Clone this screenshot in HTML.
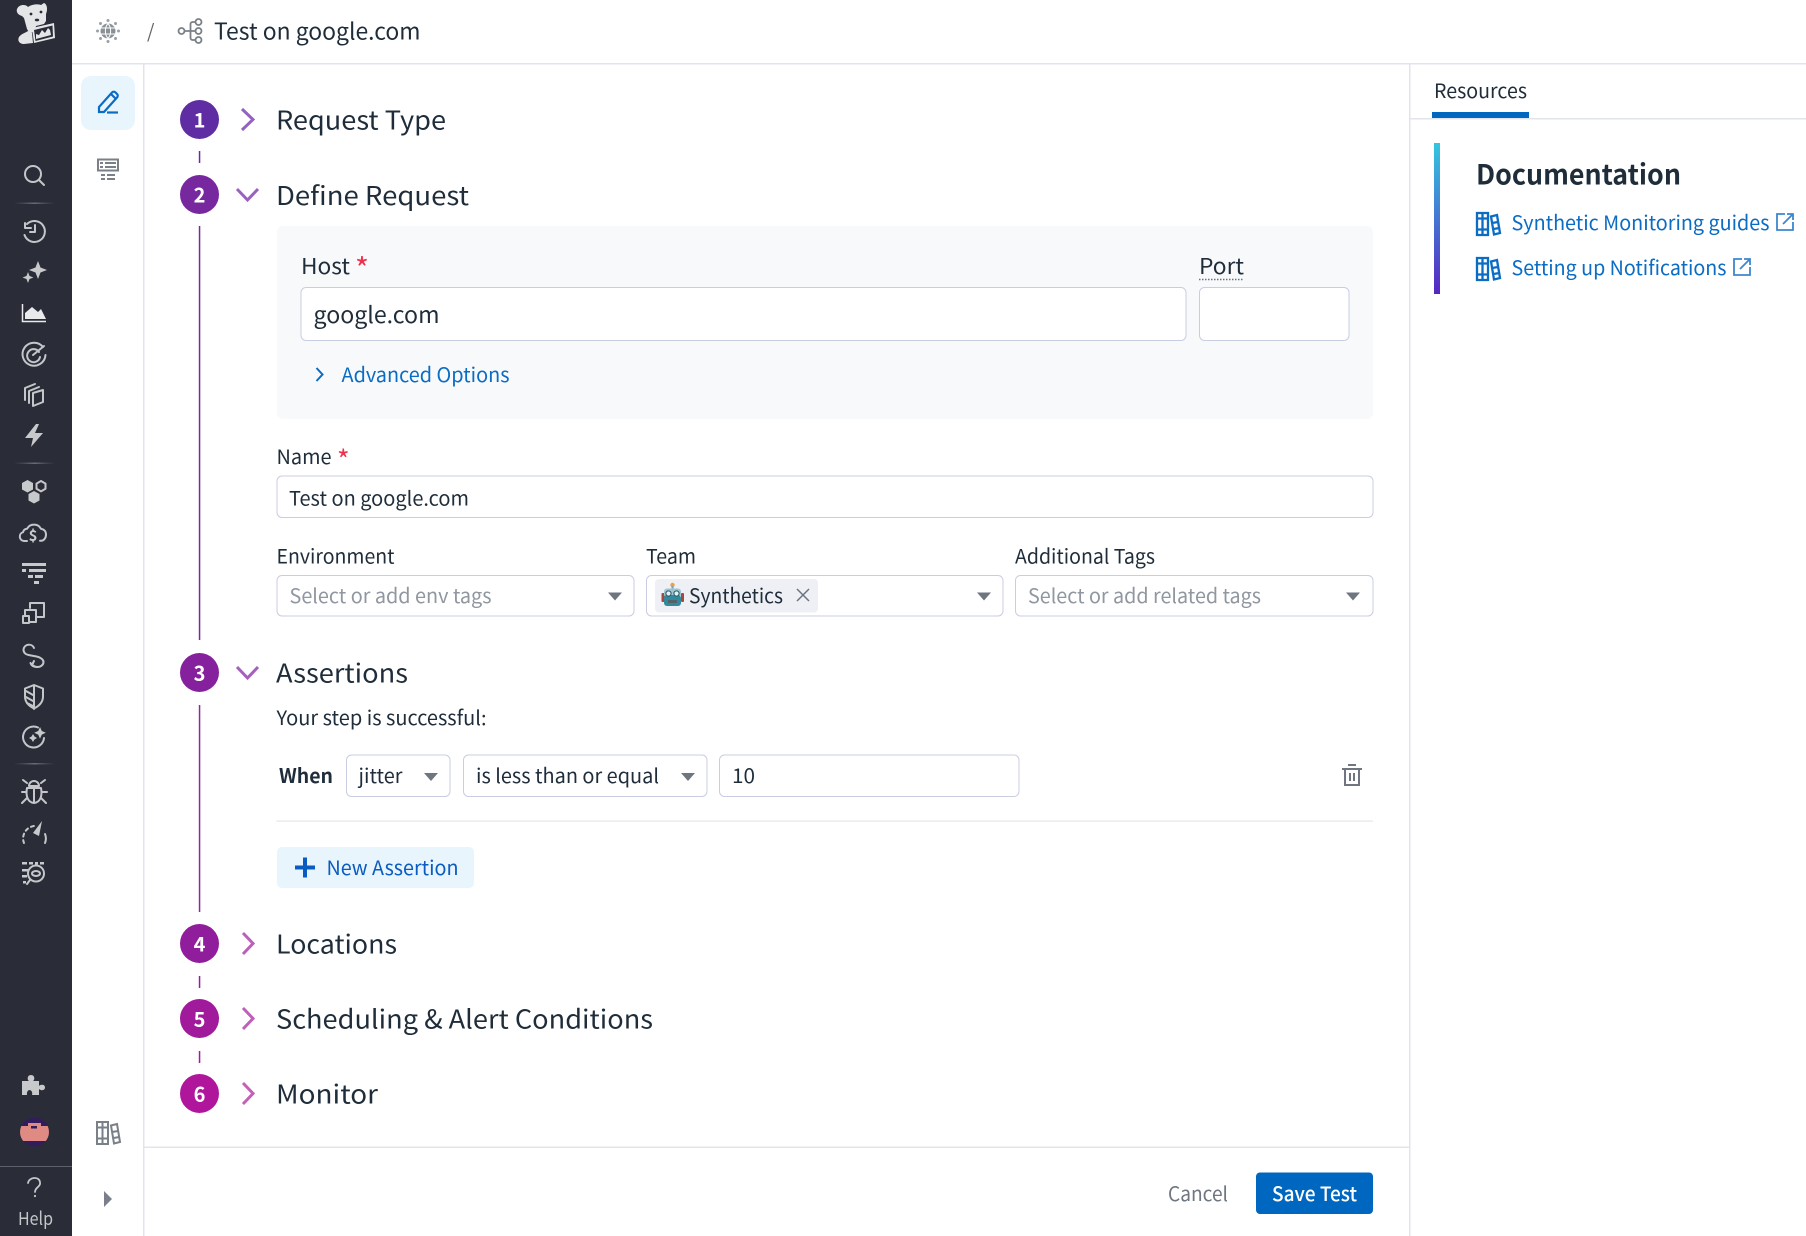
<!DOCTYPE html>
<html><head><meta charset="utf-8"><title>Test on google.com</title>
<style>
html,body{margin:0;padding:0;background:#fff;width:1806px;height:1236px;overflow:hidden}
svg{display:block}
text{font-family:"Noto Sans CJK JP","Liberation Sans",sans-serif;fill:#1f2d3a}
.s{fill:none;stroke:#c4c6c9;stroke-width:2;stroke-linecap:round;stroke-linejoin:round}
.f{fill:#c7c9cb}
.inp{fill:#fff;stroke:#c9cde2;stroke-width:1}
.car{fill:#6f7680}
.chev{fill:none;stroke:#9a62c0;stroke-width:3}
.num{fill:#fff;font-weight:700;font-size:20px;text-anchor:middle}
</style></head><body>
<svg width="1806" height="1236" viewBox="0 0 1806 1236" xmlns="http://www.w3.org/2000/svg">
<defs>
<linearGradient id="bar" x1="0" y1="0" x2="0" y2="1"><stop offset="0" stop-color="#33c6e0"/><stop offset="1" stop-color="#5626c4"/></linearGradient>
<linearGradient id="sep" x1="0" y1="0" x2="1" y2="0"><stop offset="0" stop-color="#5a5d68" stop-opacity="0"/><stop offset=".5" stop-color="#6a6d78"/><stop offset="1" stop-color="#5a5d68" stop-opacity="0"/></linearGradient>
<clipPath id="av"><circle cx="34.500" cy="1132" r="14.500"/></clipPath>
</defs>
<rect width="1806" height="1236" fill="#fff"/>
<!-- structure lines -->
<rect x="72" y="63" width="1734" height="1.500" fill="#e2e4ec"/>
<rect x="143" y="64" width="1.500" height="1172" fill="#e2e4ec"/>
<rect x="1409" y="64" width="1.500" height="1172" fill="#e2e4ec"/>
<rect x="144" y="1146.500" width="1265" height="1.500" fill="#e2e4ec"/>
<rect x="1410" y="118" width="396" height="1.500" fill="#e2e4ec"/>

<!-- sidebar -->
<rect width="72" height="1236" fill="#2a2d38"/>
<!-- logo -->
<g fill="#e4e5e6">
<path d="M17 9 C19 4 26 4 28 7 C32 4 38 4 41 5 L44 3 C47 4 48 9 46 14 L46 21 L44 24 L36 26 L35 30 L30 34 L27 29 L24 18 L22 16 C18 15 16 12 17 9Z"/>
<path d="M28 31 L32 33 L33 43 L24 44 C20 44 17 41 19 37 C21 34 25 33 28 31Z"/>
<path d="M32 28 L54 23 L55 38 L34 43Z"/>
</g>
<path d="M34 30 L52.500 25.500 L53 36.500 L35.500 41Z" fill="#2a2d38"/>
<path d="M36 39 L36 34 L39 35 L42 30 L45 33 L48 28 L50 30 L51 35 Z" fill="#e4e5e6"/>
<circle cx="31" cy="14" r="1.400" fill="#2a2d38"/><circle cx="41" cy="12" r="1.400" fill="#2a2d38"/><ellipse cx="37" cy="20" rx="2.200" ry="1.400" fill="#2a2d38"/>
<!-- search -->
<g class="s"><circle cx="33" cy="174" r="8"/><path d="M39 180l5 5"/></g>
<rect x="14" y="202.500" width="41" height="1.500" fill="url(#sep)"/>
<!-- history -->
<g class="s"><path d="M27 224a10.500 10.500 0 1 1-2.500 11M25 223v5h6M35 225v7h-5"/></g>
<!-- sparkle -->
<path class="f" d="M38 261l2.500 6.500 6.500 2.500-6.500 2.500-2.500 6.500-2.500-6.500-6.500-2.500 6.500-2.500zM28 272l1.500 4 4 1.500-4 1.500-1.500 4-1.500-4-4-1.500 4-1.500z"/>
<!-- graph -->
<path d="M22.500 304v17.500H46" fill="none" stroke="#e9eaeb" stroke-width="1.500"/>
<path d="M25 319v-6l7-6 6 5 3-3 5 10z" fill="#e9eaeb"/>
<!-- target -->
<g class="s"><path d="M43 347a11.500 11.500 0 1 0 2.500 8M39 352a6.500 6.500 0 1 0 1 5"/><path d="M33 355l11-9"/></g>
<!-- cubes -->
<g class="s" stroke-width="1.800"><path d="M33 393l10-3v12l-10 4zM29 403v-12l10-4M25 400v-12l10-4"/></g>
<!-- bolt -->
<path class="f" d="M36 424l-11 14h8l-2 9 12-14h-8l4-9z"/>
<rect x="14" y="462.500" width="41" height="1.500" fill="url(#sep)"/>
<!-- hexes -->
<path class="f" d="M27.500 480l5.500 3v6.500l-5.500 3-5.500-3v-6.500zM34 491l5.500 3v6.500l-5.500 3-5.500-3v-6.500z"/>
<path class="s" d="M41 481l4.500 2.600v5.200l-4.500 2.600-4.500-2.600v-5.200z"/>
<!-- cloud -->
<g class="s"><path d="M27 541h-3a4.500 4.500 0 0 1-1-8.800c.5-2 2-3.200 4-3.400a8 8 0 0 1 14 0c3 .5 5 2.500 5 6 0 3-2 6-5 6h-1"/></g>
<text x="33" y="541" font-size="15" font-weight="700" text-anchor="middle" style="fill:#c7c9cb">$</text>
<!-- filter -->
<path class="f" d="M22 563h24v3H22zM22 569h4v3h-4zM29 569h17v3H29zM28 575h5v3h-5zM35 575h8v3h-8zM34 581h5v3h-5z"/>
<!-- hosts -->
<g class="s" stroke-linecap="butt" stroke-linejoin="miter"><path d="M30 608v-5h14v14h-7"/><path d="M25 615v-5h11v12h-7"/><rect x="23" y="616" width="6" height="7" /></g>
<!-- link -->
<g class="s"><path d="M34 648a5.500 5.500 0 0 0-10.500 1.500c0 3 2 5 5 5.500l8 1.500c4 .8 7 3 7 5.500 0 3-3 5-6 5-3 0-6-1-7-4M34 661l-2 4 4 2"/></g>
<!-- shield -->
<g class="s"><path d="M34 685l9 3.500v8c0 6-4 9.500-9 12-5-2.500-9-6-9-12v-8zM34 685v24"/><path d="M26 691l7 4M26 697l7 4M27 703l6 3"/></g>
<!-- ai -->
<g class="s"><path d="M44 738a10.500 10.500 0 1 1-6-10.500"/></g>
<path class="f" d="M40 727l1.800 4 4 1.800-4 1.800-1.800 4-1.800-4-4-1.800 4-1.800zM33 734l1.500 2.500 2.500 1.500-2.500 1.500-1.500 2.500-1.500-2.500-2.500-1.500 2.500-1.500z"/>
<rect x="14" y="763" width="41" height="1.500" fill="url(#sep)"/>
<!-- bug -->
<g class="s"><path d="M29 786a5 5 0 0 1 10 0zM34 786v16M27 788c-1 5-1 14 7 15 8-1 8-10 7-15zM27 783l-4-3M41 783l4-3M26 792h-4M42 792h5M27 798l-5 5M41 798l5 5"/></g>
<!-- gauge -->
<g class="s" stroke-width="2.500"><path stroke-dasharray="3 3.500" d="M24 843a12.500 12.500 0 0 1 13-17"/><path d="M45 843a12 12 0 0 0 0-9"/></g>
<path class="f" d="M42 821l-3 15-6-3z"/>
<!-- logs search -->
<g class="f"><path d="M22 862h5v2.500h-5zM29 862h4v2.500h-4zM35 862h3v2.500h-3zM40 862h4v2.500h-4zM22 869h6v2.500h-6zM22 875h5v2.500h-5zM23 881h3v2.500h-3z"/></g>
<g class="s"><circle cx="36" cy="873.500" r="8"/><ellipse cx="36" cy="873.500" rx="4" ry="2.500"/><path d="M30 880l-3 4"/></g>
<!-- puzzle -->
<path class="f" d="M22 1081h7c-2-1-2-6 2-6s4 5 2 6h6v5c2-2 6-1.500 6 1.500s-4 3.500-6 1.500v6h-7c1-3-1-5-2.500-5s-3 2-2.500 5h-5z"/>
<!-- avatar -->
<circle cx="34.500" cy="1132" r="14.500" fill="#321c5c"/>
<g clip-path="url(#av)"><rect x="20" y="1126" width="29" height="15" fill="#e08a84"/><rect x="28" y="1123" width="13" height="4" fill="#e08a84"/><rect x="31" y="1126" width="6" height="2.500" fill="#321c5c"/></g>
<rect x="0" y="1166" width="72" height="1" fill="#5d606a"/>
<path d="M28 1183c1-6 11-7 12-1 1 5-5 5-5 10" fill="none" stroke="#c4c6c9" stroke-width="1.800" stroke-linecap="round"/>
<circle cx="35" cy="1196" r="1.100" fill="#c4c6c9"/>
<text x="18" y="1225" font-size="18" textLength="35" lengthAdjust="spacingAndGlyphs" style="fill:#c4c6c9">Help</text>

<!-- rail -->
<rect x="81" y="76" width="54" height="54" rx="10" fill="#e8f5fc"/>
<g fill="none" stroke="#0b6cc4" stroke-width="2.200"><path d="M99 112v-5l13-14.500c1-1 2.500-1 3.500 0l1.500 1.500c1 1 1 2.500 0 3.500L104 112zM111 94l5 5"/><path d="M107 112.500h11"/></g>
<g fill="none" stroke="#7a8087" stroke-width="2"><rect x="98" y="159.500" width="20" height="11"/></g>
<g fill="#7a8087"><path d="M100 162h3v2h-3zM105 162h11v2h-11zM100 166h3v2h-3zM105 166h11v2h-11zM101 174h4v2h-4zM107 174h8v2h-8zM101 178h4v2h-4zM107 178h8v2h-8z"/></g>
<g fill="none" stroke="#7a8087" stroke-width="2"><path d="M97 1122h11v22H97zM102.500 1122v22M97 1127.500h11M97 1138.500h11"/><path d="M111 1125.500l6-1.500 3 18-6 1.500zM112 1132l6-1M113.500 1138l6-1"/></g>
<path d="M104 1191l8 8-8 8z" fill="#79808a"/>

<!-- breadcrumb -->
<circle cx="108" cy="31" r="7.500" fill="#8a9097"/>
<g fill="none" stroke="#fff" stroke-width="1"><path d="M100.500 28h15M100.500 34h15M108 23.500c-3.500 4-3.500 11 0 15M108 23.500c3.500 4 3.500 11 0 15"/></g>
<g fill="#9aa0a6"><circle cx="108" cy="20.500" r="1.500"/><circle cx="108" cy="41.500" r="1.500"/><circle cx="97.500" cy="31" r="1.500"/><circle cx="118.500" cy="31" r="1.500"/><circle cx="100.500" cy="23.500" r="1.500"/><circle cx="115.500" cy="23.500" r="1.500"/><circle cx="100.500" cy="38.500" r="1.500"/><circle cx="115.500" cy="38.500" r="1.500"/></g>
<text x="147" y="38" font-size="19" style="fill:#5f666e">/</text>
<g fill="none" stroke="#7a8087" stroke-width="1.800"><circle cx="181.500" cy="31" r="3"/><circle cx="198.500" cy="22" r="3"/><circle cx="198.500" cy="31" r="3"/><circle cx="198.500" cy="40" r="3"/><path d="M184.500 31h11M195.500 22h-3a2 2 0 0 0-2 2v14a2 2 0 0 0 2 2h3"/></g>
<text x="214" y="39.500" font-size="23" textLength="206.500" lengthAdjust="spacingAndGlyphs">Test on google.com</text>

<!-- steps connector lines -->
<rect x="198.800" y="151" width="1.500" height="12" fill="#6a2ba0"/>
<rect x="198.800" y="226" width="1.500" height="414" fill="#782a9c"/>
<rect x="198.800" y="705" width="1.500" height="207" fill="#8a2a9c"/>
<rect x="198.800" y="976" width="1.500" height="12" fill="#951d9d"/>
<rect x="198.800" y="1051" width="1.500" height="12" fill="#a3189c"/>

<circle cx="199.500" cy="119.500" r="19.500" fill="#5f2ca4"/>
<circle cx="199.500" cy="194.500" r="19.500" fill="#77289f"/>
<circle cx="199.500" cy="672.500" r="19.500" fill="#85219c"/>
<circle cx="199.500" cy="943.500" r="19.500" fill="#901d9c"/>
<circle cx="199.500" cy="1018.500" r="19.500" fill="#a01a9b"/>
<circle cx="199.500" cy="1093.500" r="19.500" fill="#b0169b"/>
<text class="num" x="199.500" y="127.300">1</text>
<text class="num" x="199.500" y="202.300">2</text>
<text class="num" x="199.500" y="680.300">3</text>
<text class="num" x="199.500" y="951.300">4</text>
<text class="num" x="199.500" y="1026.300">5</text>
<text class="num" x="199.500" y="1101.300">6</text>
<path class="chev" d="M242 109l11 10.500-11 10.500" style="stroke:#9562c0"/>
<path class="chev" d="M237 189l10.500 11 10.500-11" style="stroke:#9a62c0"/>
<path class="chev" d="M237 667l10.500 11 10.500-11" style="stroke:#a45fc0"/>
<path class="chev" d="M243 933l10 10.500-10 10.500" style="stroke:#bb60b8"/>
<path class="chev" d="M243 1008l10 10.500-10 10.500" style="stroke:#bf60b8"/>
<path class="chev" d="M243 1083l10 10.500-10 10.500" style="stroke:#c460b6"/>

<text x="276" y="129.500" font-size="26" textLength="170" lengthAdjust="spacingAndGlyphs">Request Type</text>
<text x="276" y="205" font-size="26" textLength="193" lengthAdjust="spacingAndGlyphs">Define Request</text>
<text x="276" y="682.500" font-size="26" textLength="132" lengthAdjust="spacingAndGlyphs">Assertions</text>
<text x="276" y="953.500" font-size="26" textLength="121" lengthAdjust="spacingAndGlyphs">Locations</text>
<text x="276" y="1028.500" font-size="26" textLength="377" lengthAdjust="spacingAndGlyphs">Scheduling &amp; Alert Conditions</text>
<text x="276" y="1103.500" font-size="26" textLength="102" lengthAdjust="spacingAndGlyphs">Monitor</text>

<!-- define request box -->
<rect x="277" y="226" width="1096" height="193" rx="6" fill="#f8f9fb"/>
<text x="301" y="274" font-size="22" textLength="49" lengthAdjust="spacingAndGlyphs">Host</text>
<text x="355" y="280" font-size="30" style="fill:#f0314e">*</text>
<text x="1199" y="274" font-size="22" textLength="45" lengthAdjust="spacingAndGlyphs">Port</text>
<path d="M1199 279.500h45" stroke="#6b7280" stroke-width="1.400" stroke-dasharray="1.500 1.500"/>
<rect class="inp" x="301" y="287.500" width="885" height="53" rx="5"/>
<rect class="inp" x="1199.500" y="287.500" width="149.500" height="53" rx="5"/>
<text x="313.500" y="323" font-size="23" textLength="126" lengthAdjust="spacingAndGlyphs">google.com</text>
<path d="M316.500 368l6 6.500-6 6.500" fill="none" stroke="#0b6cc4" stroke-width="2"/>
<text x="341.500" y="382" font-size="20" textLength="168" lengthAdjust="spacingAndGlyphs" style="fill:#0b6cc4">Advanced Options</text>

<text x="276.500" y="464" font-size="20" textLength="55" lengthAdjust="spacingAndGlyphs">Name</text>
<text x="337" y="470" font-size="27" style="fill:#f0314e">*</text>
<rect class="inp" x="277" y="476" width="1096" height="41.500" rx="5"/>
<text x="289" y="505.500" font-size="20" textLength="180" lengthAdjust="spacingAndGlyphs">Test on google.com</text>

<text x="276.500" y="563.500" font-size="20" textLength="118" lengthAdjust="spacingAndGlyphs">Environment</text>
<text x="646" y="563.500" font-size="20" textLength="50" lengthAdjust="spacingAndGlyphs">Team</text>
<text x="1015" y="563.500" font-size="20" textLength="140" lengthAdjust="spacingAndGlyphs">Additional Tags</text>
<rect class="inp" x="277" y="575.500" width="357" height="40.500" rx="5"/>
<rect class="inp" x="646.500" y="575.500" width="356.500" height="40.500" rx="5"/>
<rect class="inp" x="1015.500" y="575.500" width="357.500" height="40.500" rx="5"/>
<text x="289.500" y="603" font-size="20" textLength="202" lengthAdjust="spacingAndGlyphs" style="fill:#9097a0">Select or add env tags</text>
<text x="1028" y="603" font-size="20" textLength="233" lengthAdjust="spacingAndGlyphs" style="fill:#9097a0">Select or add related tags</text>
<rect x="655" y="579" width="163" height="33.500" rx="4" fill="#eef0f5"/>
<!-- robot -->
<circle cx="672.500" cy="585" r="2.200" fill="#f0a040"/>
<rect x="671.500" y="586" width="2" height="3" fill="#8aa0a8"/>
<rect x="661.500" y="593" width="3" height="9" rx="1" fill="#a8483c"/>
<rect x="681" y="593" width="3" height="9" rx="1" fill="#a8483c"/>
<rect x="664" y="588.500" width="17" height="9" rx="3" fill="#9cc6d4"/>
<rect x="664" y="595" width="17" height="11" rx="3" fill="#2f8a9e"/>
<circle cx="668.500" cy="593.500" r="2.600" fill="#dff4fa" stroke="#33505e"/>
<circle cx="676.500" cy="593.500" r="2.600" fill="#dff4fa" stroke="#33505e"/>
<rect x="668" y="600" width="9" height="3" fill="#54606a"/>
<text x="689" y="603" font-size="20" textLength="94" lengthAdjust="spacingAndGlyphs">Synthetics</text>
<path d="M797 589l12 12m0-12l-12 12" stroke="#6b7280" stroke-width="1.500"/>
<path class="car" d="M608 592.500h14l-7 8z"/>
<path class="car" d="M977 592.500h14l-7 8z"/>
<path class="car" d="M1346 592.500h14l-7 8z"/>

<text x="276.500" y="725" font-size="20" textLength="210" lengthAdjust="spacingAndGlyphs">Your step is successful:</text>
<text x="279" y="783" font-size="20" font-weight="700" textLength="54" lengthAdjust="spacingAndGlyphs">When</text>
<rect class="inp" x="346.500" y="755" width="103.500" height="41.500" rx="5"/>
<rect class="inp" x="463.500" y="755" width="243.500" height="41.500" rx="5"/>
<rect class="inp" x="719.500" y="755" width="299.500" height="41.500" rx="5"/>
<text x="358.500" y="783" font-size="20" textLength="44" lengthAdjust="spacingAndGlyphs">jitter</text>
<text x="476" y="783" font-size="20" textLength="183" lengthAdjust="spacingAndGlyphs">is less than or equal</text>
<text x="732" y="783" font-size="20" textLength="23" lengthAdjust="spacingAndGlyphs">10</text>
<path class="car" d="M424 773h14l-7 8z"/>
<path class="car" d="M681 773h14l-7 8z"/>
<g fill="none" stroke="#6f7680" stroke-width="2"><path d="M1342 769h20M1348 765h8M1345 769v16h14v-16M1350 773v8M1354 773v8"/></g>
<rect x="276.500" y="820.500" width="1096.500" height="1.200" fill="#e4e6ec"/>
<rect x="277" y="847" width="197" height="41" rx="5" fill="#e8f5fc"/>
<path d="M295 865.500h20v4h-20zM303 857.500h4v20h-4z" fill="#0a5cc0"/>
<text x="326.500" y="875" font-size="20" textLength="132" lengthAdjust="spacingAndGlyphs" style="fill:#0a5cc0">New Assertion</text>

<!-- footer -->
<text x="1168" y="1201" font-size="20" textLength="60" lengthAdjust="spacingAndGlyphs" style="fill:#6f7680">Cancel</text>
<rect x="1256" y="1172.500" width="117" height="41.500" rx="4" fill="#0067c0"/>
<text x="1272" y="1201" font-size="20" textLength="85" lengthAdjust="spacingAndGlyphs" style="fill:#fff;font-weight:500">Save Test</text>

<!-- resources -->
<text x="1434" y="98" font-size="20" textLength="93" lengthAdjust="spacingAndGlyphs">Resources</text>
<rect x="1432" y="112" width="97" height="6" fill="#0067c0"/>
<rect x="1434" y="143" width="6" height="151" fill="url(#bar)"/>
<text x="1476" y="184.500" font-size="28" font-weight="700" textLength="205" lengthAdjust="spacingAndGlyphs">Documentation</text>
<g fill="none" stroke="#0b6cc4" stroke-width="2.300"><path d="M1477 213h11v22h-11zM1482.500 213v22M1477 218.500h11M1477 229.500h11"/><path d="M1491 216.500l6-1.500 3 18-6 1.500zM1492 223l6-1M1493.500 229l6-1"/></g>
<g fill="none" stroke="#0b6cc4" stroke-width="2.300" transform="translate(0,45)"><path d="M1477 213h11v22h-11zM1482.500 213v22M1477 218.500h11M1477 229.500h11"/><path d="M1491 216.500l6-1.500 3 18-6 1.500zM1492 223l6-1M1493.500 229l6-1"/></g>
<text x="1511.500" y="230" font-size="20" textLength="258" lengthAdjust="spacingAndGlyphs" style="fill:#0b6cc4">Synthetic Monitoring guides</text>
<text x="1511.500" y="275" font-size="20" textLength="215" lengthAdjust="spacingAndGlyphs" style="fill:#0b6cc4">Setting up Notifications</text>
<g fill="none" stroke="#3c86cf" stroke-width="1.800"><path d="M1785 214h-8v16h16v-8M1783 224l10-10M1787 214h6v6"/></g>
<g fill="none" stroke="#3c86cf" stroke-width="1.800" transform="translate(-43,45)"><path d="M1785 214h-8v16h16v-8M1783 224l10-10M1787 214h6v6"/></g>
</svg>
</body></html>
